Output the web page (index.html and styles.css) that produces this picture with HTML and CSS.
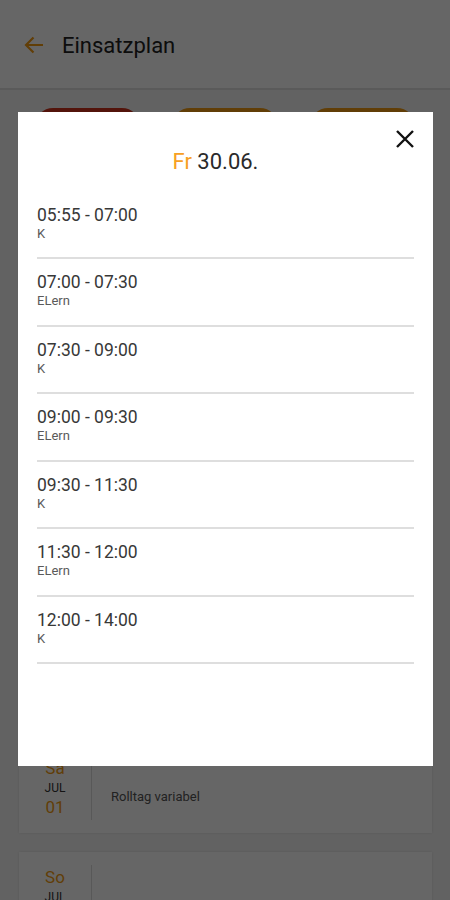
FILE: index.html
```html
<!DOCTYPE html>
<html lang="de">
<head>
    <meta charset="UTF-8">
    <meta name="viewport" content="width=device-width, initial-scale=1.0">
    <title>Einsatzplan</title>
    <link rel="stylesheet" href="styles.css">
</head>
<body>

<header class="topbar">
    <svg class="back" width="24" height="24" viewBox="0 0 24 24">
        <path d="M21 12H4M11.5 4.5L4 12l7.5 7.5" fill="none" stroke="#f39c12" stroke-width="2.2"/>
    </svg>
    <h1>Einsatzplan</h1>
</header>

<nav class="pills">
    <span class="pill active">Woche</span>
    <span class="pill">Monat</span>
    <span class="pill">Liste</span>
</nav>

<section class="days">
    <div class="card">
        <div class="date"><span class="wd">Mo</span><span class="mon">JUN</span><span class="num">26</span></div>
        <div class="info">Frei</div>
    </div>
    <div class="card">
        <div class="date"><span class="wd">Di</span><span class="mon">JUN</span><span class="num">27</span></div>
        <div class="info">Frei</div>
    </div>
    <div class="card">
        <div class="date"><span class="wd">Mi</span><span class="mon">JUN</span><span class="num">28</span></div>
        <div class="info">Frei</div>
    </div>
    <div class="card">
        <div class="date"><span class="wd">Do</span><span class="mon">JUN</span><span class="num">29</span></div>
        <div class="info">Frei</div>
    </div>
    <div class="card">
        <div class="date"><span class="wd">Fr</span><span class="mon">JUN</span><span class="num">30</span></div>
        <div class="info">05:55 - 14:00</div>
    </div>
    <div class="card">
        <div class="date"><span class="wd">Sa</span><span class="mon">JUL</span><span class="num">01</span></div>
        <div class="info">Rolltag variabel</div>
    </div>
    <div class="card">
        <div class="date"><span class="wd">So</span><span class="mon">JUL</span><span class="num">02</span></div>
        <div class="info"></div>
    </div>
</section>

<div class="overlay">
    <div class="modal">
        <button class="close" aria-label="Schließen">
            <svg width="20" height="20" viewBox="0 0 20 20">
                <path d="M2 2L18 18M18 2L2 18" stroke="#111" stroke-width="2.4"/>
            </svg>
        </button>
        <h2 class="modal-title"><span class="wd">Fr</span> 30.06.</h2>
        <ul class="shifts">
            <li><div class="time">05:55 - 07:00</div><div class="kind">K</div></li>
            <li><div class="time">07:00 - 07:30</div><div class="kind">ELern</div></li>
            <li><div class="time">07:30 - 09:00</div><div class="kind">K</div></li>
            <li><div class="time">09:00 - 09:30</div><div class="kind">ELern</div></li>
            <li><div class="time">09:30 - 11:30</div><div class="kind">K</div></li>
            <li><div class="time">11:30 - 12:00</div><div class="kind">ELern</div></li>
            <li><div class="time">12:00 - 14:00</div><div class="kind">K</div></li>
        </ul>
    </div>
</div>

</body>
</html>
```

FILE: styles.css
```css
body {
    font-family: Roboto, "Liberation Sans", sans-serif;
    margin: 0;
    padding: 0;
    background-color: #f4f4f4;
    color: #333;
    height: 900px;
    overflow: hidden;
}
.topbar {
    height: 90px;
    background: #fff;
    display: flex;
    align-items: center;
    padding: 2px 22px 0;
    border-bottom: 2px solid #e2e2e2;
    box-sizing: border-box;
}
.back {
    margin-right: 16px;
}
.topbar h1 {
    font-size: 22px;
    font-weight: 400;
    color: #222;
    margin: 0;
}
.pills {
    display: flex;
    gap: 32px;
    padding: 18px 35px 0;
}
.pill {
    width: 106px;
    height: 36px;
    border-radius: 18px;
    background: #f39c12;
    color: #fff;
    font-size: 14px;
    display: flex;
    align-items: center;
    justify-content: center;
}
.pill.active {
    background: #d0341c;
}
.days {
    padding: 54px 18px 0 19px;
    display: flex;
    flex-direction: column;
    gap: 19px;
}
.card {
    height: 90px;
    flex-shrink: 0;
    background: #fff;
    display: flex;
    align-items: center;
    box-shadow: 0 0 2px rgba(0,0,0,0.1);
}
.date {
    width: 72px;
    height: 64px;
    border-right: 1px solid #ddd;
    display: flex;
    flex-direction: column;
    align-items: center;
    justify-content: center;
}
.date .wd, .date .num {
    font-size: 17px;
    color: #f39c12;
    line-height: 21px;
}
.date .mon {
    font-size: 12px;
    color: #333;
    line-height: 18px;
}
.info {
    padding: 17px 0 0 19px;
    font-size: 13px;
    color: #555;
}
.overlay {
    position: fixed;
    top: 0;
    left: 0;
    right: 0;
    bottom: 0;
    background: rgba(0,0,0,0.6);
}
.modal {
    position: relative;
    margin: 112px 17px 0 18px;
    height: 654px;
    background: #fff;
    padding: 38px 19px 0;
    box-sizing: border-box;
}
.close {
    position: absolute;
    top: 16px;
    right: 17px;
    width: 22px;
    height: 22px;
    padding: 1px;
    border: none;
    background: none;
    cursor: pointer;
}
.modal-title {
    text-align: center;
    font-size: 22px;
    font-weight: 400;
    line-height: 24px;
    margin: 0 0 17.5px;
    padding-right: 20px;
    color: #2a2a2a;
}
.modal-title .wd {
    color: #f7a023;
}
.shifts {
    list-style: none;
    margin: 0;
    padding: 0;
}
.shifts li {
    padding: 13px 0 16.5px;
    border-bottom: 2px solid #dedede;
}
.time {
    font-size: 17.5px;
    line-height: 21px;
    color: #383838;
}
.kind {
    font-size: 13px;
    line-height: 15px;
    color: #5a5a5a;
}
```
